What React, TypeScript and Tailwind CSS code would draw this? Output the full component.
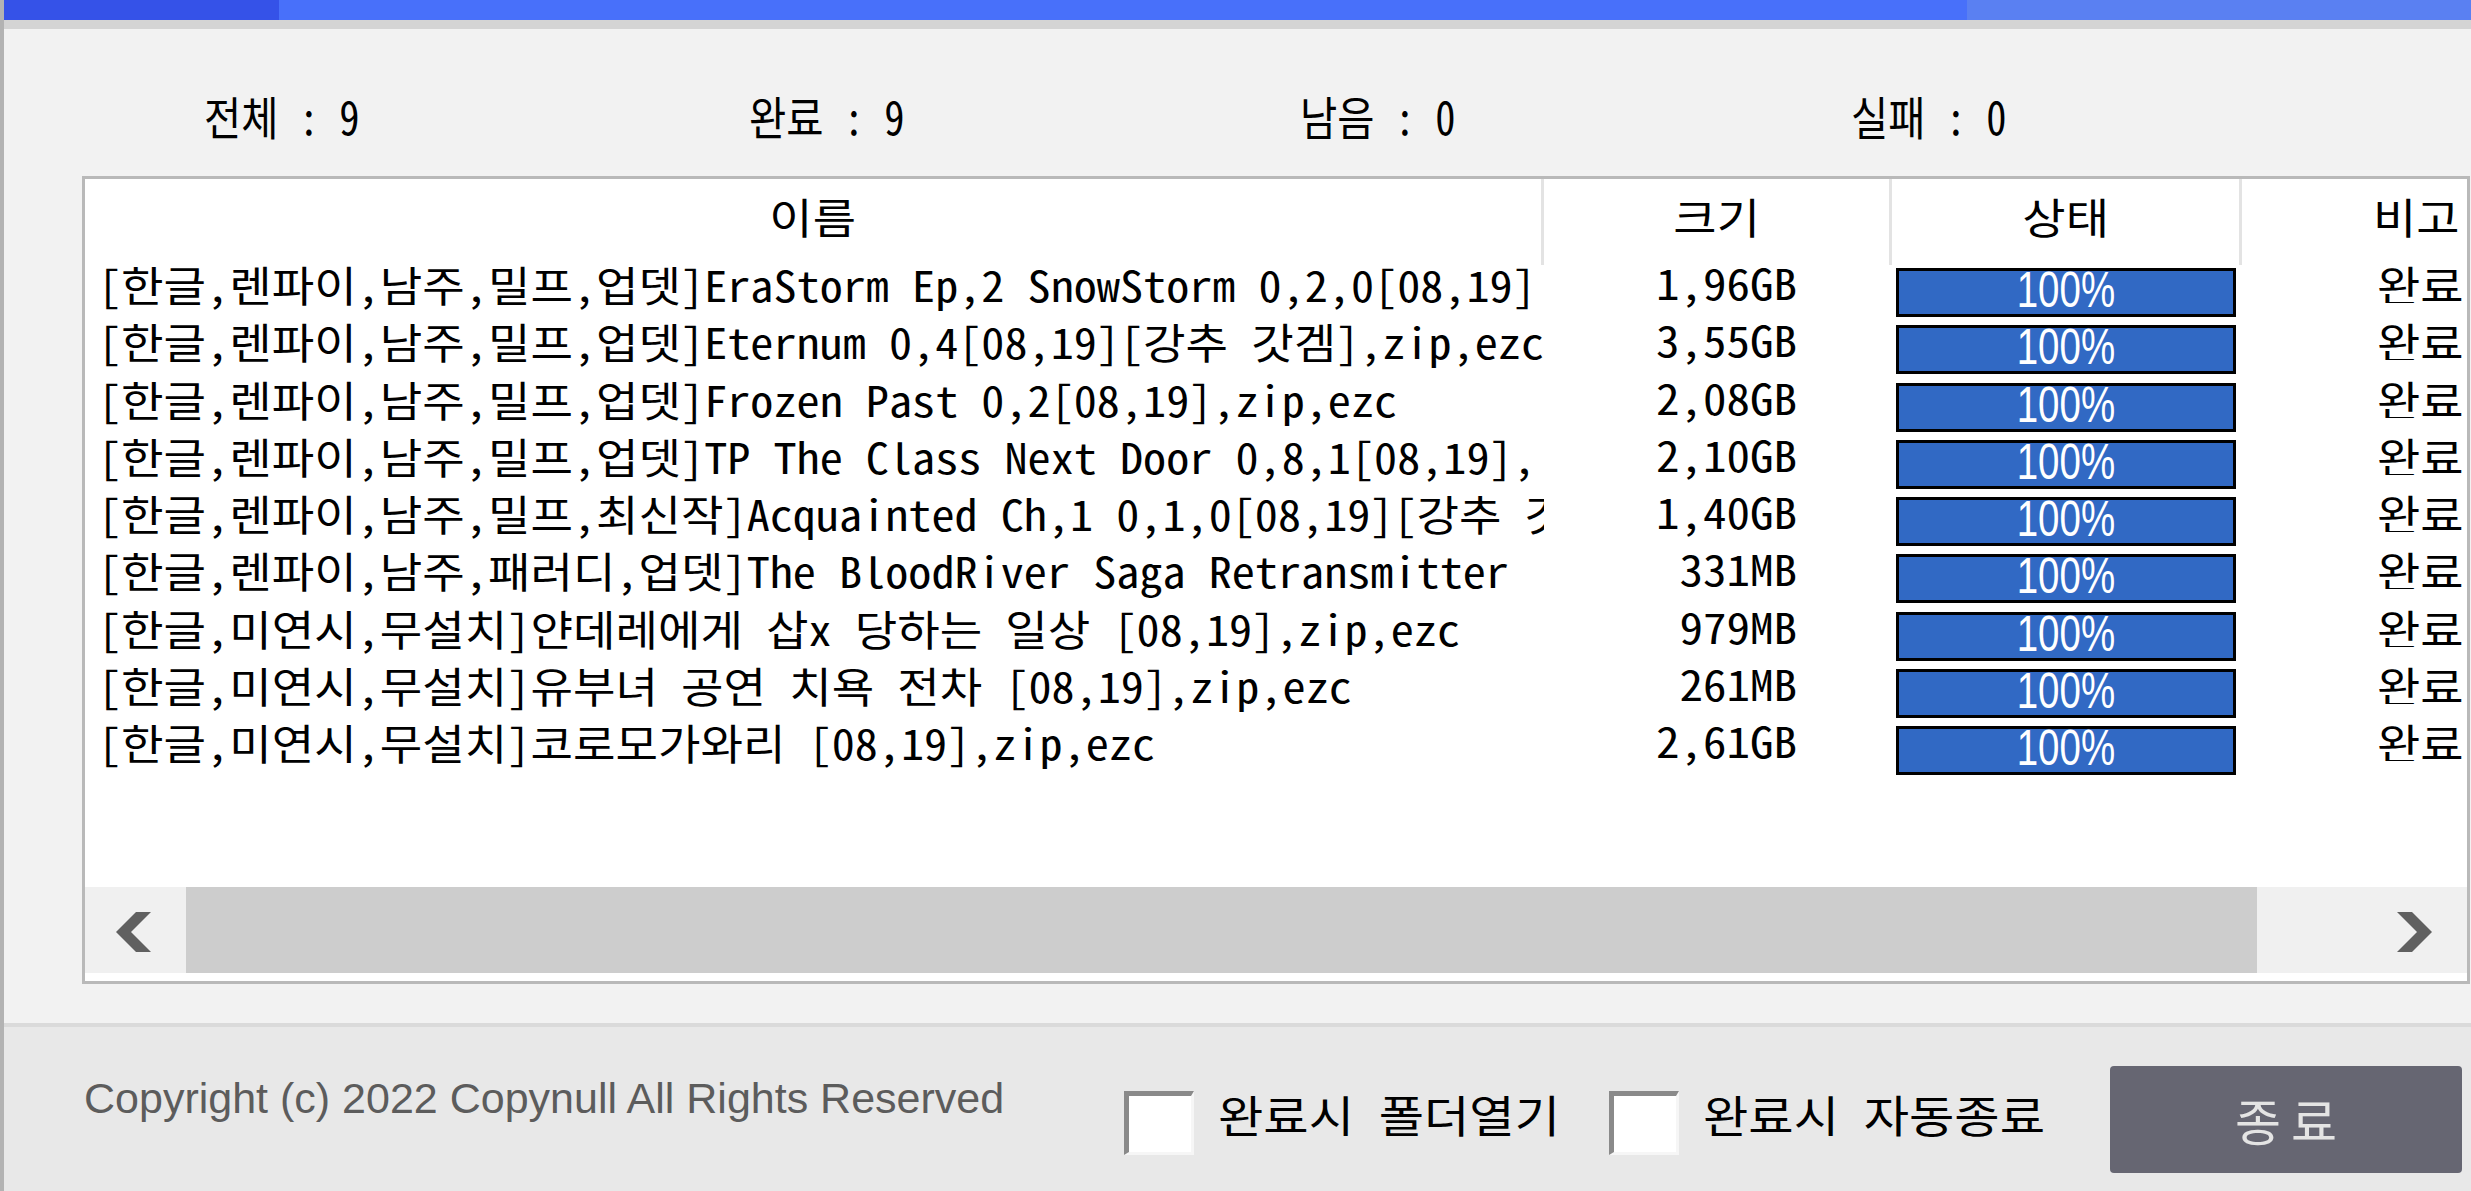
import React from "react";

const KR = "font-['Noto_Sans_Mono_CJK_KR','Noto_Sans_CJK_KR',sans-serif]";

const rows = [
  { name: "[한글,렌파이,남주,밀프,업뎃]EraStorm Ep,2 SnowStorm 0,2,0[08,19]", size: "1,96GB" },
  { name: "[한글,렌파이,남주,밀프,업뎃]Eternum 0,4[08,19][강추 갓겜],zip,ezc", size: "3,55GB" },
  { name: "[한글,렌파이,남주,밀프,업뎃]Frozen Past 0,2[08,19],zip,ezc", size: "2,08GB" },
  { name: "[한글,렌파이,남주,밀프,업뎃]TP The Class Next Door 0,8,1[08,19],", size: "2,10GB" },
  { name: "[한글,렌파이,남주,밀프,최신작]Acquainted Ch,1 0,1,0[08,19][강추 갓", size: "1,40GB" },
  { name: "[한글,렌파이,남주,패러디,업뎃]The BloodRiver Saga Retransmitter", size: "331MB" },
  { name: "[한글,미연시,무설치]얀데레에게 삽x 당하는 일상 [08,19],zip,ezc", size: "979MB" },
  { name: "[한글,미연시,무설치]유부녀 공연 치욕 전차 [08,19],zip,ezc", size: "261MB" },
  { name: "[한글,미연시,무설치]코로모가와리 [08,19],zip,ezc", size: "2,61GB" },
];

const stats = [
  { label: "전체 : 9", w: "w-[545px]" },
  { label: "완료 : 9", w: "w-[551px]" },
  { label: "남음 : 0", w: "w-[551px]" },
  { label: "실패 : 0", w: "w-[400px]" },
];

function LeftChevron() {
  return (
    <svg width="35" height="40" viewBox="0 0 35 40">
      <polygon points="35,0 20,0 0,20 20,40 35,40 15,20" fill="#606060" />
    </svg>
  );
}

function RightChevron() {
  return (
    <svg width="35" height="40" viewBox="0 0 35 40">
      <polygon points="0,0 15,0 35,20 15,40 0,40 20,20" fill="#606060" />
    </svg>
  );
}

function CheckBox() {
  return (
    <div className="w-[70px] h-[64px] mt-[64px] shrink-0 bg-white border-t-[5px] border-l-[5px] border-r-[3px] border-b-[3px] border-t-[#8a8a8a] border-l-[#8a8a8a] border-r-[#f6f6f6] border-b-[#f6f6f6]" />
  );
}

export default function App() {
  return (
    <div className={`w-[2471px] h-[1191px] bg-[#f2f2f2] border-l-[4px] border-[#b3b3b3] flex flex-col overflow-hidden text-black ${KR}`}>
      {/* title bar */}
      <div className="h-[20px] flex shrink-0">
        <div className="w-[275px] bg-[#3552e8]" />
        <div className="w-[1688px] bg-[#4870fa]" />
        <div className="flex-1 bg-[#5a80f2]" />
      </div>
      <div className="h-[9px] bg-[#d4d4d4] shrink-0" />

      {/* stats */}
      <div className="h-[147px] shrink-0 flex items-start pt-[63px] pl-[200px] text-[46px] leading-[46px]">
        {stats.map((s) => (
          <div key={s.label} className={`${s.w} shrink-0`}>
            <span className="inline-block origin-left scale-x-[0.88] whitespace-pre">{s.label}</span>
          </div>
        ))}
      </div>

      {/* table */}
      <div className="ml-[78px] w-[2388px] h-[808px] shrink-0 border-[3px] border-[#b9b9b9] bg-white flex flex-col overflow-hidden">
        {/* header */}
        <div className="h-[86px] shrink-0 flex text-[42px] leading-[42px]">
          <div className="w-[1459px] shrink-0 border-r-[3px] border-[#e3e3e3] flex justify-center pt-[16px]">
            <span className="inline-block origin-center scale-x-[1.12]">이름</span>
          </div>
          <div className="w-[348px] shrink-0 border-r-[3px] border-[#e3e3e3] flex justify-center pt-[16px]">
            <span className="inline-block origin-center scale-x-[1.12]">크기</span>
          </div>
          <div className="w-[350px] shrink-0 border-r-[3px] border-[#e3e3e3] flex justify-center pt-[16px]">
            <span className="inline-block origin-center scale-x-[1.12]">상태</span>
          </div>
          <div className="flex-1 pl-[131px] pt-[16px] overflow-hidden">
            <span className="inline-block origin-left scale-x-[1.12] whitespace-nowrap">비고</span>
          </div>
        </div>

        {/* body */}
        <div className="h-[622px] shrink-0 flex flex-col">
          {rows.map((r) => (
            <div key={r.name} className="h-[57.3px] shrink-0 flex items-start text-[42px]">
              <div className="w-[1459px] h-full shrink-0 overflow-hidden pl-[13px] leading-[38px]">
                <span className="inline-block origin-left scale-x-[1.1] whitespace-pre">{r.name}</span>
              </div>
              <div className="w-[348px] shrink-0 flex justify-end pr-[95px] leading-[30px] pt-[2px]">
                <span className="inline-block origin-right scale-x-[1.12] whitespace-pre">{r.size}</span>
              </div>
              <div className="w-[350px] shrink-0 pl-[4px] pt-[3px]">
                <div className="w-[340px] h-[49px] border-[3px] border-black bg-[#3169c4] flex justify-center items-start">
                  <span className="inline-block origin-center scale-x-[0.77] text-white text-[50px] leading-[39px] font-['Liberation_Sans',Arial,sans-serif]">
                    100%
                  </span>
                </div>
              </div>
              <div className="flex-1 pl-[135px] leading-[38px] overflow-hidden">
                <span className="inline-block origin-left scale-x-[1.12] whitespace-nowrap">완료</span>
              </div>
            </div>
          ))}
        </div>

        {/* horizontal scrollbar */}
        <div className="h-[86px] shrink-0 flex bg-[#f0f0f0]">
          <div className="w-[101px] shrink-0 pl-[31px] pt-[25px]">
            <LeftChevron />
          </div>
          <div className="w-[2071px] shrink-0 bg-[#cdcdcd]" />
          <div className="flex-1 pl-[140px] pt-[25px]">
            <RightChevron />
          </div>
        </div>
        <div className="flex-1 bg-white" />
      </div>

      <div className="h-[39px] shrink-0" />
      <div className="h-[4px] shrink-0 bg-[#dadada]" />

      {/* bottom panel */}
      <div className="flex-1 bg-[#e8e8e8] flex items-start">
        <div className="ml-[80px] w-[1040px] shrink-0 mt-[50px] font-['Liberation_Sans',Arial,sans-serif] text-[43px] leading-[43px] text-[#5c5c5c] whitespace-nowrap">
          Copyright (c) 2022 Copynull All Rights Reserved
        </div>
        <CheckBox />
        <div className="ml-[24px] w-[391px] shrink-0 mt-[65px] text-[44px] leading-[44px]">
          <span className="inline-block origin-left scale-x-[1.12] whitespace-pre">완료시 폴더열기</span>
        </div>
        <CheckBox />
        <div className="ml-[24px] w-[407px] shrink-0 mt-[65px] text-[44px] leading-[44px]">
          <span className="inline-block origin-left scale-x-[1.12] whitespace-pre">완료시 자동종료</span>
        </div>
        <div className="w-[352px] h-[107px] mt-[39px] shrink-0 rounded-[4px] bg-[#666672] flex items-center justify-center text-[50px] text-[#e4e4e4] tracking-[10px] pl-[10px]">
          종료
        </div>
      </div>
    </div>
  );
}
